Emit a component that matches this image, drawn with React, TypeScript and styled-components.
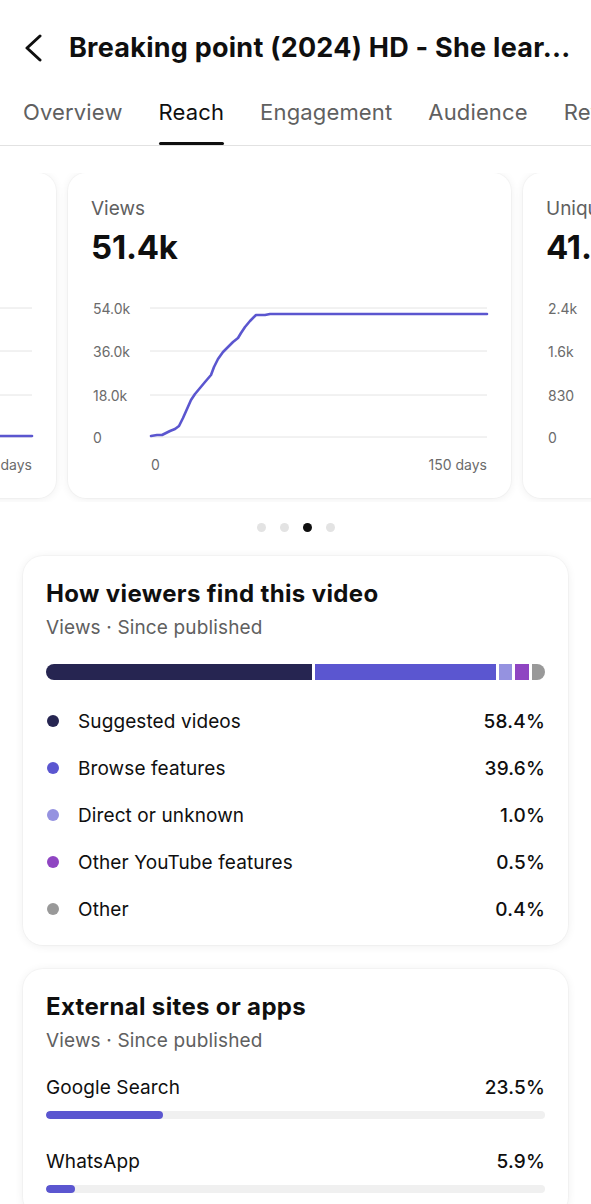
import React from "react";
import styled, { createGlobalStyle } from "styled-components";

const GlobalStyle = createGlobalStyle`
  html, body { margin: 0; padding: 0; background: #ffffff; }
  body { font-family: Inter, "Noto Sans", "Liberation Sans", sans-serif; color: #0f0f0f; -webkit-font-smoothing: antialiased; }
  * { box-sizing: border-box; }
`;

const Page = styled.div`
  width: 591px;
  min-height: 1204px;
  overflow: hidden;
  background: #fff;
`;

const Header = styled.header`
  height: 95px;
  display: flex;
  align-items: center;
  padding-left: 22px;
  gap: 25px;
`;

const BackButton = styled.button`
  border: 0;
  background: none;
  padding: 0;
  width: 22px;
  height: 28px;
  display: flex;
  align-items: center;
  justify-content: center;
  color: #0f0f0f;
`;

const Title = styled.h1`
  margin: 0;
  font-size: 27px;
  font-weight: 700;
  letter-spacing: 0.25px;
  white-space: nowrap;
  line-height: 32px;
`;

const Tabs = styled.nav`
  display: flex;
  gap: 36px;
  padding-left: 23px;
  border-bottom: 1px solid #e2e2e2;
  white-space: nowrap;
  overflow: hidden;
`;

const Tab = styled.div<{ $active?: boolean }>`
  position: relative;
  padding: 4px 0 20px;
  line-height: 26px;
  font-size: 22px;
  font-weight: 400;
  letter-spacing: 0.15px;
  color: ${(p) => (p.$active ? "#0f0f0f" : "#606060")};
  &::after {
    content: "";
    position: absolute;
    left: 0;
    right: 0;
    bottom: 0;
    height: 3px;
    border-radius: 2px;
    background: ${(p) => (p.$active ? "#0f0f0f" : "transparent")};
  }
`;

const Carousel = styled.div`
  margin-top: 27px;
  overflow: hidden;
  padding: 0 0 4px;
`;

const Track = styled.div<{ $offset: number }>`
  display: flex;
  gap: 12px;
  margin-left: ${(p) => p.$offset}px;
`;

const MetricCard = styled.div`
  flex: 0 0 443px;
  height: 325px;
  background: #fff;
  border-radius: 18px;
  box-shadow: 0 0 0 1px rgba(0, 0, 0, 0.025), 0 1px 10px rgba(0, 0, 0, 0.07);
  padding: 24px 24px 0 23px;
  display: flex;
  flex-direction: column;
`;

const MetricLabel = styled.div`
  font-size: 19px;
  line-height: 24px;
  color: #606060;
  white-space: nowrap;
`;

const MetricValue = styled.div`
  margin-top: 6px;
  font-size: 33px;
  line-height: 40px;
  font-weight: 700;
  letter-spacing: -0.2px;
  white-space: nowrap;
`;

const ChartSvg = styled.svg`
  margin-top: 23px;
  display: block;
  overflow: visible;
`;

const Dots = styled.div`
  margin-top: 21px;
  display: flex;
  justify-content: center;
  gap: 14px;
`;

const Dot = styled.span<{ $active?: boolean }>`
  width: 9px;
  height: 9px;
  border-radius: 50%;
  background: ${(p) => (p.$active ? "#0f0f0f" : "#e3e3e3")};
`;

const Section = styled.section<{ $gapTop: number }>`
  margin: ${(p) => p.$gapTop}px 23px 0;
  background: #fff;
  border-radius: 20px;
  box-shadow: 0 0 0 1px rgba(0, 0, 0, 0.025), 0 1px 10px rgba(0, 0, 0, 0.07);
  padding: 23px 23px 24px 23px;
`;

const SectionTitle = styled.h2`
  margin: 0;
  font-size: 24px;
  line-height: 30px;
  font-weight: 700;
  letter-spacing: 0.35px;
`;

const SectionSub = styled.div`
  margin-top: 7px;
  font-size: 19px;
  line-height: 24px;
  letter-spacing: 0.15px;
  color: #606060;
`;

const StackBar = styled.div`
  margin-top: 24px;
  height: 16px;
  display: flex;
  gap: 3px;
  border-radius: 8px;
  overflow: hidden;
`;

const Segment = styled.div<{ $color: string; $grow: number; $min?: number }>`
  background: ${(p) => p.$color};
  flex: ${(p) => p.$grow} 1 0;
  min-width: ${(p) => p.$min ?? 0}px;
`;

const Legend = styled.div`
  margin-top: 29px;
  display: flex;
  flex-direction: column;
  gap: 23px;
`;

const LegendRow = styled.div`
  display: flex;
  align-items: center;
  height: 24px;
  font-size: 19px;
`;

const LegendDot = styled.span<{ $color: string }>`
  width: 12px;
  height: 12px;
  border-radius: 50%;
  background: ${(p) => p.$color};
  margin-left: 1px;
  margin-right: 19px;
`;

const LegendLabel = styled.span`
  flex: 1;
  color: #0f0f0f;
  letter-spacing: 0.1px;
`;

const Value = styled.span`
  font-weight: 500;
  color: #0f0f0f;
  font-size: 19px;
  letter-spacing: 0.2px;
`;

const Items = styled.div`
  margin-top: 22px;
  display: flex;
  flex-direction: column;
  gap: 30px;
`;

const Item = styled.div`
  display: flex;
  flex-direction: column;
  gap: 12px;
`;

const ItemHead = styled.div`
  display: flex;
  justify-content: space-between;
  align-items: center;
  height: 24px;
  font-size: 19px;
`;

const BarTrack = styled.div`
  height: 8px;
  border-radius: 4px;
  background: #f0f0f0;
  overflow: hidden;
`;

const BarFill = styled.div`
  height: 100%;
  border-radius: 4px;
  background: #5b56d0;
`;

type Metric = {
  label: string;
  value: string;
  ticks: string[];
  points: [number, number][];
};

const viewsPoints: [number, number][] = [
  [151, 437], [157, 436], [162, 436], [166, 434], [170, 432], [175, 430], [179, 427],
  [183, 419], [187, 410], [191, 401], [195, 395], [200, 389], [205, 383], [211, 376],
  [214, 368], [218, 360], [223, 353], [228, 348], [233, 343], [238, 339], [241, 334],
  [245, 328], [250, 322], [256, 316], [265, 316], [270, 315], [276, 315], [487, 315],
];

const metrics: Metric[] = [
  { label: "Impressions", value: "612k", ticks: ["900k", "600k", "300k", "0"], points: [[151, 437], [487, 437]] },
  { label: "Impressions click-through rate", value: "4.2%", ticks: ["9.0%", "6.0%", "3.0%", "0"], points: [[151, 437], [487, 437]] },
  { label: "Views", value: "51.4k", ticks: ["54.0k", "36.0k", "18.0k", "0"], points: viewsPoints },
  { label: "Unique viewers", value: "41.9k", ticks: ["2.4k", "1.6k", "830", "0"], points: [[151, 437], [487, 437]] },
];

const grid = [18, 61, 105, 147];

function Chart({ m }: { m: Metric }) {
  const d = m.points.map(([x, y], i) => `${i ? "L" : "M"}${x - 91} ${y - 291}`).join(" ");
  return (
    <ChartSvg width={396} height={185} viewBox="0 0 396 185">
      {grid.map((y, i) => (
        <g key={y}>
          <line x1={59} x2={396} y1={y} y2={y} stroke="#e4e4e4" strokeWidth={1} />
          <text x={2} y={y} dominantBaseline="central" fontSize={14} fill="#6b6b6b" fontFamily="Inter, sans-serif">
            {m.ticks[i]}
          </text>
        </g>
      ))}
      <text x={60} y={174} dominantBaseline="central" fontSize={14} fill="#6b6b6b" fontFamily="Inter, sans-serif">0</text>
      <text x={396} y={174} dominantBaseline="central" textAnchor="end" fontSize={14} fill="#6b6b6b" fontFamily="Inter, sans-serif">150 days</text>
      <path d={d} fill="none" stroke="#5b56cf" strokeWidth={2.6} strokeLinejoin="round" strokeLinecap="round" />
    </ChartSvg>
  );
}

const sources = [
  { label: "Suggested videos", value: "58.4%", color: "#262551", grow: 58.4 },
  { label: "Browse features", value: "39.6%", color: "#5b56d0", grow: 39.6 },
  { label: "Direct or unknown", value: "1.0%", color: "#9592e0", grow: 0 },
  { label: "Other YouTube features", value: "0.5%", color: "#8f45c2", grow: 0 },
  { label: "Other", value: "0.4%", color: "#999999", grow: 0 },
];

const external = [
  { label: "Google Search", value: 23.5 },
  { label: "WhatsApp", value: 5.9 },
];

export default function App() {
  return (
    <Page>
      <GlobalStyle />
      <Header>
        <BackButton aria-label="Back">
          <svg width="22" height="28" viewBox="0 0 22 28" fill="none">
            <path d="M18 2 L5 14 L18 26" stroke="#0f0f0f" strokeWidth="3" strokeLinecap="round" strokeLinejoin="round" />
          </svg>
        </BackButton>
        <Title>Breaking point (2024) HD - She lear...</Title>
      </Header>
      <Tabs>
        {["Overview", "Reach", "Engagement", "Audience", "Revenue"].map((t) => (
          <Tab key={t} $active={t === "Reach"}>{t}</Tab>
        ))}
      </Tabs>
      <Carousel>
        <Track $offset={-842}>
          {metrics.map((m) => (
            <MetricCard key={m.label}>
              <MetricLabel>{m.label}</MetricLabel>
              <MetricValue>{m.value}</MetricValue>
              <Chart m={m} />
            </MetricCard>
          ))}
        </Track>
      </Carousel>
      <Dots>
        {[0, 1, 2, 3].map((i) => (
          <Dot key={i} $active={i === 2} />
        ))}
      </Dots>
      <Section $gapTop={24}>
        <SectionTitle>How viewers find this video</SectionTitle>
        <SectionSub>Views · Since published</SectionSub>
        <StackBar>
          {sources.map((s) => (
            <Segment key={s.label} $color={s.color} $grow={s.grow} $min={s.grow ? 0 : 13.5} />
          ))}
        </StackBar>
        <Legend>
          {sources.map((s) => (
            <LegendRow key={s.label}>
              <LegendDot $color={s.color} />
              <LegendLabel>{s.label}</LegendLabel>
              <Value>{s.value}</Value>
            </LegendRow>
          ))}
        </Legend>
      </Section>
      <Section $gapTop={24}>
        <SectionTitle>External sites or apps</SectionTitle>
        <SectionSub>Views · Since published</SectionSub>
        <Items>
          {external.map((e) => (
            <Item key={e.label}>
              <ItemHead>
                <LegendLabel>{e.label}</LegendLabel>
                <Value>{e.value}%</Value>
              </ItemHead>
              <BarTrack>
                <BarFill style={{ width: `${e.value}%` }} />
              </BarTrack>
            </Item>
          ))}
        </Items>
      </Section>
    </Page>
  );
}
